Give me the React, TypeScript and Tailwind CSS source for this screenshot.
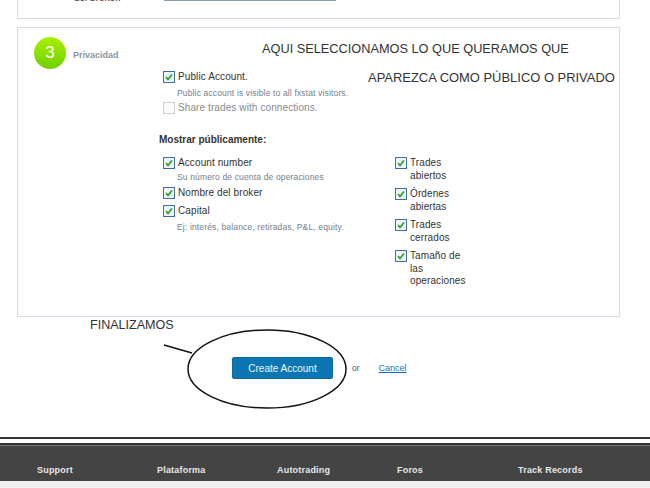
import React from "react";

const font = { fontFamily: '"Liberation Sans", Arial, sans-serif' };

function Check({ on = true }: { on?: boolean }) {
  if (!on) {
    return <span className="block h-[12px] w-[12px] shrink-0 border border-[#d0d0d0] bg-[#fafafa]" />;
  }
  return (
    <span className="flex h-[12px] w-[12px] shrink-0 items-center justify-center border border-[#3f6f9a] bg-[#eef4f8]">
      <svg width="8" height="8" viewBox="0 0 8 8">
        <path d="M1 4l2 2.4L7 1.4" fill="none" stroke="#1fa01f" strokeWidth="1.6" />
      </svg>
    </span>
  );
}

function Option({ label, hint, className = "", hintClass = "mt-[4px]" }: { label: string; hint?: string; className?: string; hintClass?: string }) {
  return (
    <div className={className}>
      <div className="flex items-center gap-[3px] text-[10px] leading-[12px] tracking-[0.1px] text-[#333]">
        <Check />
        <span>{label}</span>
      </div>
      {hint && <p className={`${hintClass} ml-[14px] text-[8.5px] leading-[12px] tracking-[0.15px] text-[#75808c]`}>{hint}</p>}
    </div>
  );
}

function SideOption({ lines }: { lines: string[] }) {
  return (
    <div className="flex gap-[3px]">
      <Check />
      <span className="text-[10px] leading-[12.5px] tracking-[0.1px] text-[#333]">
        {lines.map((l) => (
          <span key={l} className="block">{l}</span>
        ))}
      </span>
    </div>
  );
}

export default function App() {
  const footer = [
    { label: "Support", w: "w-[120px]" },
    { label: "Plataforma", w: "w-[120px]" },
    { label: "Autotrading", w: "w-[120px]" },
    { label: "Foros", w: "w-[121px]" },
    { label: "Track Records", w: "w-[100px]" },
  ];

  return (
    <div className="relative h-[488px] w-[650px] overflow-hidden bg-white" style={font}>
      {/* previous step, cut off by the top of the page */}
      <div className="mx-[17px] flex h-[19px] w-[603px] items-start overflow-hidden border-x border-b border-[#d5dbe8]">
        <span className="ml-[56px] mt-[-8px] text-[10px] leading-[12px] text-[#333]">del broker.</span>
        <span className="ml-[43px] block h-px w-[172px] bg-[#8a9bac]" />
      </div>

      {/* step 3 */}
      <section className="mx-[17px] mt-[8px] flex h-[290px] w-[603px] border border-[#d5dbe8]">
        <div className="flex w-[141px] shrink-0 items-start pl-[16px] pt-[9px]">
          <div className="flex h-[32px] w-[32px] shrink-0 items-center justify-center rounded-full bg-gradient-to-b from-[#a8f000] to-[#6fd000] text-[17px] text-white">
            3
          </div>
          <span className="ml-[7px] mt-[12px] text-[9px] font-bold leading-[12px] text-[#8a94a0]">Privacidad</span>
        </div>

        <div className="flex flex-col pt-[43px]">
          <div className="ml-[4px]">
            <Option label="Public Account." hint="Public account is visible to all fxstat visitors." />
            <div className="mt-[3px] flex items-center gap-[3px] text-[10px] leading-[12px] tracking-[0.1px] text-[#8a8a8a]">
              <Check on={false} />
              <span>Share trades with connections.</span>
            </div>
          </div>

          <h3 className="mt-[20px] text-[10px] font-bold leading-[12px] text-[#333]">Mostrar públicamente:</h3>

          <div className="mt-[11px] flex">
            <div className="ml-[4px] w-[232px]">
              <Option label="Account number" hint="Su número de cuenta de operaciones" hintClass="mt-[2px]" />
              <Option label="Nombre del broker" className="mt-[4px]" />
              <Option label="Capital" hint="Ej: interés, balance, retiradas, P&L, equity." className="mt-[6px]" />
            </div>
            <div className="flex flex-col gap-[6px]">
              <SideOption lines={["Trades", "abiertos"]} />
              <SideOption lines={["Órdenes", "abiertas"]} />
              <SideOption lines={["Trades", "cerrados"]} />
              <SideOption lines={["Tamaño de", "las", "operaciones"]} />
            </div>
          </div>
        </div>
      </section>

      {/* actions */}
      <div className="ml-[232px] mt-[40px] flex items-center">
        <button className="h-[22px] w-[101px] rounded-[2px] border border-[#0a6aa0] bg-[#0b76b3] text-[10px] text-[#eef6fb]">
          Create Account
        </button>
        <span className="ml-[19px] text-[8.5px] text-[#555]">or</span>
        <a className="ml-[19px] mt-px text-[9px] text-[#0a7ab5] underline">Cancel</a>
      </div>

      {/* footer */}
      <div className="mt-[58px] h-[2px] bg-[#333]" />
      <div className="mt-[4px] h-[2px] bg-[#333]" />
      <div className="flex h-[36px] items-end bg-[#444] pb-[5px] pl-[37px] shadow-[inset_0_1px_0_#777]">
        {footer.map((f) => (
          <span key={f.label} className={`${f.w} text-[9px] font-bold leading-[12px] tracking-[0.2px] text-[#e8e8e8]`}>
            {f.label}
          </span>
        ))}
      </div>
      <div className="h-[8px] bg-[#f0f0f0]" />

      {/* hand-written notes on top of the screenshot */}
      <span className="absolute left-[262px] top-[41px] text-[12.75px] leading-[15px] text-[#333]">
        AQUI SELECCIONAMOS LO QUE QUERAMOS QUE
      </span>
      <span className="absolute left-[368px] top-[70px] text-[12.95px] leading-[15px] text-[#333]">
        APAREZCA COMO PÚBLICO O PRIVADO
      </span>
      <span className="absolute left-[90px] top-[318px] text-[12.55px] leading-[15px] text-[#333]">FINALIZAMOS</span>
      <svg className="absolute left-[160px] top-[325px]" width="192" height="88" viewBox="0 0 192 88">
        <ellipse cx="107" cy="44" rx="79" ry="39" fill="none" stroke="#111" strokeWidth="1.5" />
        <path d="M4 20L32 28" stroke="#111" strokeWidth="1.5" />
      </svg>
    </div>
  );
}
